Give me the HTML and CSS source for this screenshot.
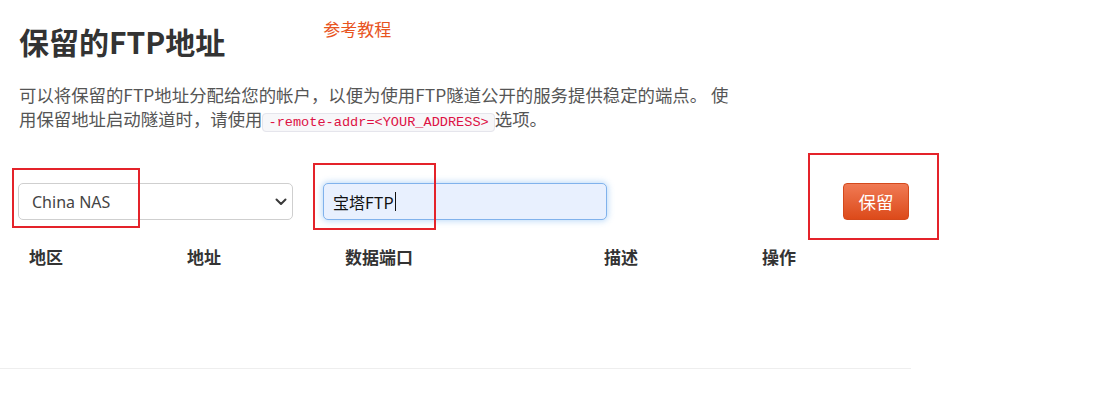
FILE: index.html
```html
<html>
<head>
	<meta charset="UTF-8">
	<link rel="stylesheet" href="styles.css">
</head>
<body>
	<div class="page">
		<div class="head">
			<h1>保留的FTP地址</h1>
			<a class="guide" href="#">参考教程</a>
		</div>
		<p class="intro">可以将保留的FTP地址分配给您的帐户，以便为使用FTP隧道公开的服务提供稳定的端点。 使用保留地址启动隧道时，请使用<code>-remote-addr=&lt;YOUR_ADDRESS&gt;</code>选项。</p>
		<div class="form-row">
			<div class="select">
				<select>
					<option>China NAS</option>
				</select>
				<svg class="chevron" width="12" height="8" viewBox="0 0 12 8">
					<path d="M1.5 1.5 L6 6 L10.5 1.5" fill="none" stroke="#3a3a3a" stroke-width="2" stroke-linecap="round" stroke-linejoin="round"/>
				</svg>
			</div>
			<div class="field">宝塔FTP<span class="caret"></span></div>
			<button class="keep">保留</button>
		</div>
		<div class="table-head">
			<span>地区</span>
			<span>地址</span>
			<span>数据端口</span>
			<span>描述</span>
			<span>操作</span>
		</div>
		<div class="table-body"></div>

		<div class="mark mark-region"></div>
		<div class="mark mark-name"></div>
		<div class="mark mark-button"></div>
	</div>
</body>
</html>
```

FILE: styles.css
```css
body {
	margin: 0;
	background: #fff;
	font-family: "Noto Sans CJK SC", "Noto Sans", sans-serif;
	color: #333;
}
.page {
	position: relative;
	width: 911px;
	box-sizing: border-box;
	padding-left: 18px;
	border-bottom: 1px solid #eeeeee;
}
.head {
	display: flex;
	align-items: flex-start;
}
.head h1 {
	margin: 23px 0 0 1px;
	font-size: 30px;
	line-height: 36px;
	font-weight: bold;
	color: #333;
}
.head .guide {
	margin: 19px 0 0 98px;
	font-size: 17px;
	line-height: 20px;
	color: #e8541e;
	text-decoration: none;
}
.intro {
	margin: 24px 0 0 1px;
	width: 722px;
	font-size: 17.4px;
	line-height: 24px;
	color: #555;
}
.intro code {
	font-family: "Liberation Mono", "DejaVu Sans Mono", monospace;
	font-size: 13.6px;
	line-height: 18px;
	color: #dd1144;
	background-color: #f7f7f9;
	border: 1px solid #e5e5ec;
	border-radius: 4px;
	padding: 1px 5px;
}
.form-row {
	display: flex;
	align-items: center;
	margin-top: 51px;
	height: 37px;
}
.select {
	position: relative;
	width: 275px;
	height: 37px;
}
.select select {
	-webkit-appearance: none;
	appearance: none;
	width: 100%;
	height: 100%;
	box-sizing: border-box;
	padding: 0 30px 0 13px;
	border: 1px solid #cfcfcf;
	border-radius: 5px;
	background: #fff;
	font-family: "Noto Sans", sans-serif;
	font-size: 16px;
	color: #444;
}
.select .chevron {
	position: absolute;
	right: 6px;
	top: 15px;
	pointer-events: none;
}
.field {
	display: flex;
	align-items: center;
	margin-left: 30px;
	width: 284px;
	height: 37px;
	box-sizing: border-box;
	padding-left: 9px;
	border: 1px solid #80b2ec;
	border-radius: 5px;
	background: #e8f0fe;
	box-shadow: 0 0 6px 1px rgba(102, 170, 240, 0.45);
	font-size: 16px;
	color: #111;
}
.field .caret {
	display: inline-block;
	width: 1px;
	height: 19px;
	margin-left: 1px;
	background: #111;
}
.keep {
	margin-left: 236px;
	width: 66px;
	height: 37px;
	border: 1px solid #d4491c;
	border-radius: 4px;
	background: linear-gradient(#f07a54, #dc4a1a);
	color: #fff;
	font-family: "Noto Sans CJK SC", sans-serif;
	font-size: 17.5px;
	padding: 0;
}
.table-head {
	display: grid;
	grid-template-columns: 158px 158px 259px 158px auto;
	margin-top: 25px;
	padding-left: 11px;
	font-size: 17px;
	line-height: 24px;
	font-weight: bold;
	color: #333;
}
.table-body {
	height: 99px;
}
.mark {
	position: absolute;
	border: 2px solid #e4232a;
	box-sizing: border-box;
}
.mark-region {
	left: 12px;
	top: 168px;
	width: 128px;
	height: 60px;
}
.mark-name {
	left: 313px;
	top: 163px;
	width: 123px;
	height: 67px;
}
.mark-button {
	left: 808px;
	top: 153px;
	width: 131px;
	height: 87px;
}
```
